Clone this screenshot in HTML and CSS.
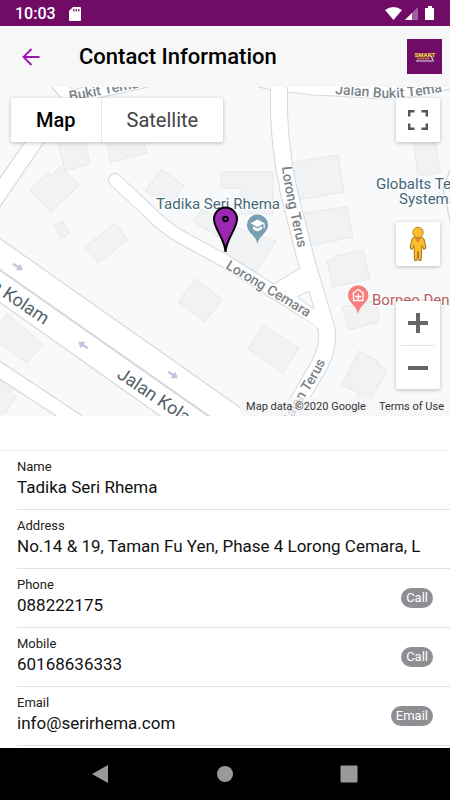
FILE: index.html
```html
<!DOCTYPE html>
<html lang="en">
<head>
<meta charset="utf-8">
<meta name="viewport" content="width=device-width, initial-scale=1">
<title>Contact Information</title>
<link rel="stylesheet" href="styles.css">
</head>
<body>
<div class="status">
  <span class="clock">10:03</span>
  <svg class="sd" viewBox="0 0 12 14" width="12" height="14"><path fill="#fff" d="M4 0h7a1 1 0 0 1 1 1v12a1 1 0 0 1-1 1H1a1 1 0 0 1-1-1V4z"/><path stroke="#700b66" stroke-width="1.2" d="M4.8 2v2.600M7.300 2v2.600M9.800 2v2.600"/></svg>
  <svg class="signals" viewBox="0 0 50 16" width="50" height="16"><path fill="#fff" d="M0 4Q8.500-2 17 4L8.500 14z"/><path fill="#a4609e" d="M33 1v13H20z"/><path fill="#fff" d="M27 7v7h-7z"/><path fill="#fff" d="M43 0h4v2h2v12h-9V2h3z"/></svg>
</div>
<header class="navbar">
  <button class="back" aria-label="Back"><svg viewBox="0 0 18 18" width="18" height="18"><path d="M17.500 9H1.500M9.500 1 1.500 9l8 8" fill="none" stroke="#9c14b0" stroke-width="1.800"/></svg></button>
  <h1>Contact Information</h1>
  <svg class="logo" viewBox="0 0 35 35" width="35" height="35"><path fill="#700b66" d="M0 0h35v35H0z"/><text x="7.500" y="18" class="logo-top">SMART</text><path d="M10 19.500h13" stroke="#c98038" stroke-width="2" stroke-dasharray="2 .6"/><path d="M9 22h18" stroke="#b7a3c4" stroke-width="1.500"/><path d="M24 17l2 4" stroke="#c9c1d5" stroke-width="1.500"/></svg>
</header>
<main>
<section class="map" aria-label="Map">
  <svg class="canvas" viewBox="0 87 450 329" preserveAspectRatio="xMidYMid slice">
    <defs>
      <path id="cemara" d="M115 180L146 209Q166 229 181 237L225 261L322 322"/>
      <path id="terus" d="M279 80V112C280 145 286 184 295 216L306 260L325 324Q331 341 320 364L292 412L286 426"/>
      <path id="arrow" d="M-6-1.200H0V-4L6 0 0 4V1.200H-6z" fill="#c3c6df"/>
      <path id="bukit" d="M335 94L385 98Q415 98 455 89"/>
      <path id="terus-label" d="M282 167C284 192 295 232 301 262"/>
      <path id="terus-low" d="M290 425Q300 404 311 388Q320 374 333 346"/>
    </defs>
    <path fill="#f8f9fb" d="M0 87h450v329H0z"/>
    <g fill="#f1f2f4" stroke="#e6e8ea">
      <path d="M56 135H84L90 164 65 171z"/><path d="M105 135H142L147 153 111 162z"/>
      <path d="M30 190L48 173 51 176 60 167 79 185 51 212z"/><path d="M54 226L62 221 70 232 62 239z"/>
      <path d="M85 247L115 223 128 240 98 263z"/><path d="M145 191L162 169 184 186 170 205z"/>
      <path d="M193 221L202 209 232 226 225 241z"/><path d="M238 228L276 241 256 272 222 252z"/>
      <path d="M221 172H273V214H241V188H221z"/><path d="M290 163L338 155 344 192 298 200z"/>
      <path d="M304 213L347 207 353 237 309 246z"/><path d="M327 261L336 258V256L363 250 370 279 333 287z"/>
      <path d="M342 307L376 300 379 318 377 320 378 322 349 330z"/><path d="M263 325L299 348 283 373 248 349z"/>
      <path d="M359 351L379 362V366L388 370 366 407 353 402 359 393 342 385z"/><path d="M413 135H434L440 173 418 176z"/>
      <path d="M195 279L222 299 205 322 178 302z"/><path d="M7 314L43 344 27 363-8 338z"/>
      <path d="M-2 374L15 385 10 393 16 397 5 414H-2z"/>
    </g>
    <path d="M155 87V416M0 260H450" stroke="#f3f4f6"/>
    <g stroke="#d5d8dc" fill="#fff" stroke-width="1.200">
      <path d="M50 85L61 98 25 142-5 185V214L44 142 75 103 148 87V80z"/>
      <path d="M68 86L74 90 86 86" fill="none"/>
      <path d="M-5 235L255 418V430H180L-5 299z"/>
      <path d="M-5 358L90 421H64L-5 376z"/>
      <path d="M255 86L271 90 287 92 313 95 335 96 385 99 407 98 455 88V80H255z"/>
      <path d="M452 165L443 188 452 230V165z" fill="#f8f9fb"/>
    </g>
    <path d="M-5 266.500L215 420.500" stroke="#d5d8dc" stroke-width="2.200"/>
    <g fill="none" stroke-linecap="round">
      <g stroke="#d5d8dc"><use href="#cemara" stroke-width="14"/><use href="#terus" stroke-width="18"/><path d="M272 292L307 271" stroke-width="13"/></g>
      <g stroke="#fff"><use href="#cemara" stroke-width="12"/><use href="#terus" stroke-width="16"/><path d="M272 292L307 271" stroke-width="11"/></g>
    </g>
    <path d="M285 289L305 277 322 300 320 329 292 310z" fill="#fff"/>
    <path d="M297 297L309 291 314 309z" fill="#f8f9fb" stroke="#d5d8dc"/>
    <use href="#arrow" transform="translate(18 267) rotate(34)"/><use href="#arrow" transform="translate(83 345) rotate(214)"/><use href="#arrow" transform="translate(173 375) rotate(34)"/>
    <g class="street">
      <text transform="translate(70 101) rotate(-11)">Bukit Tema</text>
      <text><textPath href="#bukit">Jalan Bukit Tema</textPath></text>
      <text><textPath href="#terus-label">Lorong Terus</textPath></text>
      <text><textPath href="#terus-low">Jalan Terus</textPath></text>
      <text transform="translate(225 268) rotate(31)">Lorong Cemara</text>
    </g>
    <g class="road">
      <text transform="translate(44 325) rotate(34)" text-anchor="end">Jalan Kolam</text>
      <text transform="translate(116 377) rotate(34)">Jalan Kolam</text>
    </g>
    <g class="place">
      <text x="156" y="209">Tadika Seri Rhema</text>
      <text x="376" y="189">Globalts Tech</text>
      <text x="399" y="204">Systems</text>
      <text x="372" y="305" class="clinic">Borneo Dental</text>
    </g>
    <path d="M257.500 244C256 235 247 233 247 225a10.500 10.500 0 0 1 21 0C268 233 259 235 257.500 244z" fill="#78a0b2"/>
    <path d="M257.500 219.500l7 3.800-7 3.800-7-3.800z" fill="#fff"/><path d="M253 226.200l4.500 2.400 4.500-2.400v3l-4.500 2.400-4.500-2.400zM263.500 223.500h1.200v5h-1.200z" fill="#fff"/>
    <path d="M358 314C356.500 305 348 303 348 295.500a10.200 10.200 0 0 1 20.400 0C368.400 303 359.500 305 358 314z" fill="#f77e7d"/>
    <path d="M352.500 293.500l5.700-4 5.700 4M353.500 293.500v7h9.500v-7M358.200 293.500v6M355.200 296.500h6" fill="none" stroke="#fff" stroke-width="1.300"/>
    <path d="M225.500 252C225 239 214 229 214 219a11.500 11.500 0 0 1 23 0C237 229 226 239 225.500 252z" fill="#9c27b0" stroke="#000" stroke-width="2"/>
    <circle cx="225.500" cy="219" r="2.300" fill="#9c27b0" stroke="#000" stroke-width="2"/>
  </svg>
  <div class="types"><button class="on">Map</button><button>Satellite</button></div>
  <button class="tool full" aria-label="Fullscreen"><svg viewBox="0 0 20 20" width="20" height="20"><path d="M1.200 6.500V1.200H6.500M13.500 1.200h5.300V6.500M18.800 13.500v5.300H13.500M6.500 18.800H1.200V13.500" fill="none" stroke="#555" stroke-width="2.400"/></svg></button>
  <div class="side">
    <button class="tool" aria-label="Street View"><svg viewBox="0 0 20 36" width="20" height="36"><path d="M6 11h8l2 2 2 9-2 1.500-2-4-1 15H11l-1-9-1 9H6.500L6 19.500l-2 4L2 22l2-9z" fill="#fdbe2c" stroke="#9d7221"/><path d="M6.500 11.500h7L10 17z" fill="#e58330"/><circle cx="10" cy="6.500" r="5.200" fill="#fdbe2c" stroke="#b8872a"/></svg></button>
    <div class="zoom">
      <button aria-label="Zoom in"><svg viewBox="0 0 20 20" width="20" height="20"><path d="M10 0v20M0 10h20" stroke="#666" stroke-width="4"/></svg></button>
      <button aria-label="Zoom out"><svg viewBox="0 0 20 20" width="20" height="20"><path d="M0 10h20" stroke="#666" stroke-width="4"/></svg></button>
    </div>
  </div>
  <div class="credit"><span>Map data ©2020 Google</span><a href="#terms">Terms of Use</a></div>
</section>
<dl class="list">
  <div class="row"><div class="field"><dt>Name</dt><dd>Tadika Seri Rhema</dd></div></div>
  <div class="row"><div class="field"><dt>Address</dt><dd>No.14 &amp; 19, Taman Fu Yen, Phase 4 Lorong Cemara, L</dd></div></div>
  <div class="row"><div class="field"><dt>Phone</dt><dd>088222175</dd></div><a class="badge" href="tel:088222175">Call</a></div>
  <div class="row"><div class="field"><dt>Mobile</dt><dd>60168636333</dd></div><a class="badge" href="tel:60168636333">Call</a></div>
  <div class="row"><div class="field"><dt>Email</dt><dd>info@serirhema.com</dd></div><a class="badge" href="mailto:info@serirhema.com">Email</a></div>
</dl>
</main>
<nav class="system">
  <button aria-label="Back"><svg viewBox="0 0 18 18" width="18" height="18"><path d="M16 0v18L0 9z" fill="#999"/></svg></button>
  <button aria-label="Home"><svg viewBox="0 0 18 18" width="18" height="18"><circle cx="9" cy="9" r="8" fill="#999"/></svg></button>
  <button aria-label="Recent apps"><svg viewBox="0 0 18 18" width="18" height="18"><rect x="0.500" y="0.500" width="17" height="17" rx="1" fill="#999"/></svg></button>
</nav>
</body>
</html>
```
FILE: styles.css
```css
* { box-sizing: border-box; }
body {
  margin: 0;
  min-height: 100vh;
  display: flex;
  flex-direction: column;
  background: #fff;
  color: #000;
  font-family: Roboto, sans-serif;
}
button {
  display: flex;
  align-items: center;
  justify-content: center;
  padding: 0;
  border: 0;
  background: none;
  font: inherit;
}
.status {
  display: flex;
  align-items: center;
  height: 26px;
  padding: 1px 15px 0;
  background: #700b66;
  color: #fff;
}
.clock { font-size: 16px; font-weight: 500; line-height: 26px; }
.sd { margin-left: 13px; }
.signals { margin-left: auto; }
.navbar {
  display: flex;
  align-items: center;
  height: 61px;
  padding: 0 8px 0 10px;
  background: #f7f7f8;
}
.back { width: 42px; height: 42px; }
h1 { flex: 1; margin: 0 0 0 27px; font-size: 22px; font-weight: 500; line-height: 30px; }
.logo-top { font: 900 6px Roboto, sans-serif; fill: #e9dc35; }
main { flex: 1; display: flex; flex-direction: column; }
.map {
  position: relative;
  flex: 1;
  min-height: 329px;
  overflow: hidden;
  background: #f8f9fb;
}
.canvas { position: absolute; width: 100%; height: 100%; }
.street text { font-size: 14px; font-weight: 500; fill: #7b8389; stroke: #fff; stroke-width: 2px; paint-order: stroke; }
.road text { font-size: 18px; fill: #53626a; }
.place text { font-size: 15px; fill: #456778; stroke: #fff; stroke-width: 2px; paint-order: stroke; }
.place .clinic { fill: #b75d60; }
.types, .tool, .zoom {
  background: #fff;
  border-radius: 2px;
  box-shadow: 0 1px 4px rgba(0, 0, 0, .25);
}
.types { position: absolute; top: 11px; left: 11px; display: flex; }
.types button { height: 44px; padding: 0 25px; font-size: 20px; color: #444; }
.types .on { border-right: 1px solid #e6e6e6; font-weight: 500; color: #000; }
.tool { width: 44px; height: 44px; }
.full { position: absolute; top: 11px; right: 10px; }
.side { position: absolute; right: 10px; bottom: 27px; display: grid; gap: 35px; }
.zoom { padding: 0 5px; }
.zoom button { width: 34px; height: 44px; }
.zoom button + button { border-top: 1px solid #e3e3e3; }
.credit {
  position: absolute;
  right: 0;
  bottom: 0;
  display: flex;
  gap: 13px;
  padding: 0 6px;
  background: rgba(247, 247, 248, .7);
  color: #333;
  font-size: 11px;
  line-height: 19px;
}
.credit a { color: inherit; text-decoration: none; }
.list { margin: 34px 0 2px; border-top: 1px solid #eee; }
.row {
  display: flex;
  align-items: center;
  height: 59px;
  margin-left: 17px;
  padding-right: 17px;
  border-bottom: 1px solid #e2e2e2;
}
.field { flex: 1; min-width: 0; padding-bottom: 2px; }
dt { font-size: 13px; line-height: 16px; color: #222; }
dd { margin: 0; overflow: hidden; white-space: nowrap; font-size: 17px; line-height: 24px; color: #111; }
.badge {
  padding: 0 5px;
  border-radius: 10px;
  background: #8e8e93;
  color: #fff;
  font-size: 13px;
  line-height: 20px;
  text-decoration: none;
}
.system {
  display: flex;
  align-items: center;
  justify-content: center;
  gap: 82px;
  height: 52px;
  background: #000;
}
.system button { width: 42px; height: 42px; }
```
